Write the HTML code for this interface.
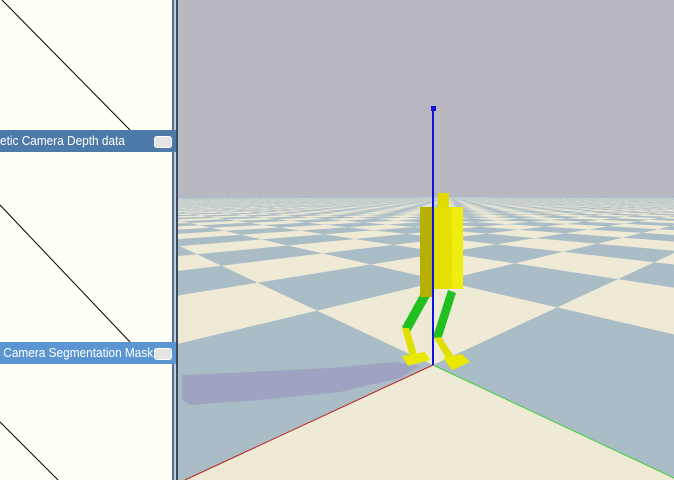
<!DOCTYPE html>
<html><head><meta charset="utf-8"><style>
html,body{margin:0;padding:0;width:674px;height:480px;overflow:hidden;background:#b9b8c0;font-family:"Liberation Sans",sans-serif}
.bar{position:absolute;left:0;width:176px;height:22px;color:#fff;font-size:13px;line-height:22px;white-space:nowrap;overflow:hidden}
.bar span{display:inline-block;transform:scaleX(0.91);transform-origin:0 50%}
.btn{position:absolute;right:4px;top:6px;width:16px;height:10px;border-radius:3px;background:#e4e4e4;border:1px solid #fff}
</style></head><body>
<svg id="s" width="674" height="480" style="position:absolute;left:0;top:0;display:block">
<rect x="178" y="0" width="496" height="480" fill="#b9b8c0"/>
<g id="floor"></g>
<polygon points="182,375 250,372 330,368 395,362 420,366 400,378 340,392 260,400 190,405 182,400" fill="#9c9cc0" opacity="0.8"/>
<line x1="433" y1="365" x2="185" y2="480" stroke="#c02020" stroke-width="1"/>
<line x1="433" y1="365" x2="674" y2="478" stroke="#40d040" stroke-width="1"/>
<polygon points="426,284 434,289 410,332 402,327" fill="#20c020"/>
<polygon points="402,328 409,328 418,358 411,360" fill="#e0e000"/>
<polygon points="402,356 425,352 430,360 408,366" fill="#e8e800"/>
<polygon points="448,290 456,293 441,340 433,337" fill="#20c020"/>
<polygon points="434,338 441,337 455,358 448,361" fill="#e0e000"/>
<polygon points="443,358 462,354 470,362 452,370" fill="#e8e800"/>
<rect x="420" y="207" width="14" height="90" fill="#b8b000"/>
<rect x="433" y="207" width="30" height="82" fill="#e4e000"/>
<rect x="452" y="207" width="11" height="82" fill="#f0ee10"/>
<rect x="438" y="193" width="11" height="15" fill="#e0dc00"/>
<line x1="433" y1="108" x2="433" y2="365" stroke="#1010e0" stroke-width="2"/>
<rect x="431" y="106" width="5" height="5" fill="#1010e0"/>
<rect x="0" y="0" width="172" height="480" fill="#fffff6"/>
<line x1="2" y1="0" x2="130" y2="130" stroke="#000" stroke-width="1"/>
<line x1="0" y1="205" x2="130" y2="342" stroke="#000" stroke-width="1"/>
<line x1="0" y1="422" x2="58" y2="480" stroke="#000" stroke-width="1"/>
<rect x="172" y="0" width="2" height="480" fill="#4a70a0"/>
<rect x="174" y="0" width="2" height="480" fill="#c8ccd8"/>
<rect x="176" y="0" width="2" height="480" fill="#3a4a60"/>
</svg>
<div class="bar" style="top:130px;background:#4d7aa8"><span>etic Camera Depth data</span><div class="btn"></div></div>
<div class="bar" style="top:342px;background:#5b96d2"><span>&nbsp;Camera Segmentation Mask</span><div class="btn"></div></div>
<script>
var a=0.517,b=0.475;
function P(u,v){var w=a*u+b*v+1;return [(797*a*u+73*b*v+433)/w,(196*a*u+196*b*v+365)/w];}
function clip(poly){var e=0.004,out=[];for(var i=0;i<poly.length;i++){var p=poly[i],q=poly[(i+1)%poly.length];var wp=a*p[0]+b*p[1]+1-e,wq=a*q[0]+b*q[1]+1-e;if(wp>=0)out.push(p);if((wp>=0)!=(wq>=0)){var t=wp/(wp-wq);out.push([p[0]+t*(q[0]-p[0]),p[1]+t*(q[1]-p[1])]);}}return out;}
var s='<rect x="178" y="196" width="496" height="284" fill="#aabcc6"/>';
for(var u=-30;u<120;u++)for(var v=-30;v<120;v++){
 if(((u+v)%2+2)%2)continue;
 var c=clip([[u,v],[u+1,v],[u+1,v+1],[u,v+1]]);if(c.length<3)continue;
 var pts=c.map(function(p){var q=P(p[0],p[1]);return q[0].toFixed(1)+','+q[1].toFixed(1)}).join(' ');
 s+='<polygon points="'+pts+'" fill="#eeead6"/>';}
document.getElementById('floor').innerHTML=s;
</script>
</body></html>
